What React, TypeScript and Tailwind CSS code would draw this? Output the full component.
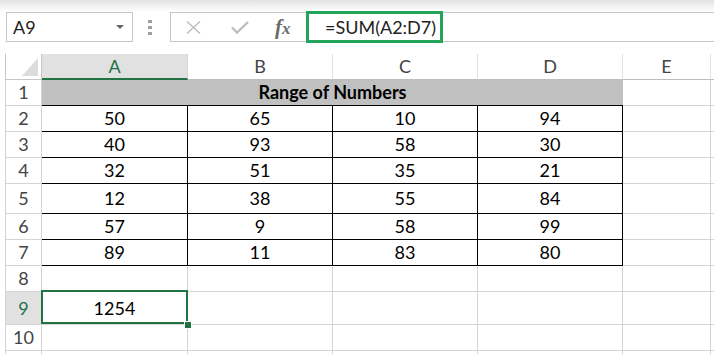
import React from "react";

const cols = [
  { name: "A", w: "w-[146px]" },
  { name: "B", w: "w-[145px]" },
  { name: "C", w: "w-[145px]" },
  { name: "D", w: "w-[145px]" },
  { name: "E", w: "w-[88px]" },
];

const heights = ["h-[26px]", "h-[26px]", "h-[26px]", "h-[26px]", "h-[30px]", "h-[26px]", "h-[26px]", "h-[26px]", "h-[33px]", "h-[26px]"];

const data = [
  [50, 65, 10, 94],
  [40, 93, 58, 30],
  [32, 51, 35, 21],
  [12, 38, 55, 84],
  [57, 9, 58, 99],
  [89, 11, 83, 80],
];

const Toolbar = () => (
  <div className="flex h-[30px] pl-[6px]">
    <div className="w-[127px] h-full border border-[#c6c6c6] flex items-center pl-[6px] pr-[8px]">
      <span className="text-[18px] text-[#222]">A9</span>
      <svg className="ml-auto" width="8" height="4" viewBox="0 0 8 4">
        <path d="M0 0 L8 0 L4 4 Z" fill="#666" />
      </svg>
    </div>
    <div className="w-[37px] flex flex-col items-center justify-center gap-[3px] pr-[4px]">
      <div className="w-[4px] h-[3px] bg-[#a0a0a0]" />
      <div className="w-[4px] h-[3px] bg-[#a0a0a0]" />
      <div className="w-[4px] h-[3px] bg-[#a0a0a0]" />
    </div>
    <div className="flex-1 flex border-y border-l border-[#c6c6c6]">
      <div className="w-[135px] flex items-center">
        <svg className="ml-[15px]" width="15" height="13" viewBox="0 0 15 13">
          <path d="M1 0.5 L14 12.5 M14 0.5 L1 12.5" stroke="#bdbdbd" strokeWidth="1.4" fill="none" />
        </svg>
        <svg className="ml-[30px]" width="18" height="13" viewBox="0 0 18 13">
          <path d="M1 6.5 L6 11.5 L17 1" stroke="#bdbdbd" strokeWidth="2.4" fill="none" />
        </svg>
        <span className="ml-[26px] font-['Liberation_Serif',serif] italic font-bold text-[21px] text-[#6a6a6a] leading-none">
          f<span className="text-[17px]">x</span>
        </span>
      </div>
      <div className="-my-[2px] w-[137px] border-[3px] border-[#22a55a] flex items-center pl-[16px]">
        <span className="text-[18px] text-[#222]">=SUM(A2:D7)</span>
      </div>
    </div>
  </div>
);

const HeaderRow = () => (
  <div className="flex h-[26px] pl-[5px] mt-[12px]">
    <div className="w-[37px] h-full border-l border-r border-b border-[#c6c6c6] relative">
      <svg className="absolute right-[3px] bottom-[3px]" width="16" height="18" viewBox="0 0 16 18">
        <path d="M16 0 L16 18 L0 18 Z" fill="#dcdcdc" />
      </svg>
    </div>
    {cols.map((c, i) =>
      i === 0 ? (
        <div
          key={c.name}
          className={`${c.w} h-full bg-[#e1e1e1] border-r border-[#d4d4d4] border-b-2 border-b-[#217346] flex items-center justify-center text-[18px] text-[#217346]`}
        >
          {c.name}
        </div>
      ) : (
        <div
          key={c.name}
          className={`${c.w} h-full border-r border-r-[#e1e1e1] border-b border-b-[#bdbdbd] flex items-center justify-center text-[18px] text-[#444]`}
        >
          {c.name}
        </div>
      )
    )}
    <div className="flex-1 h-full border-b border-[#bdbdbd]" />
  </div>
);

const RowHead = ({ n, h, active }: { n?: number; h: string; active?: boolean }) => (
  <div
    className={`w-[37px] ${h} border-l border-r border-b border-[#d4d4d4] flex items-center justify-center text-[18px] ${
      active ? "bg-[#e1e1e1] text-[#217346]" : "text-[#444]"
    }`}
  >
    {n}
  </div>
);

export default function App() {
  return (
    <div className="w-[714px] h-[354px] bg-white overflow-hidden font-['Lato',sans-serif]">
      <div className="h-[12px] bg-gradient-to-b from-[#e2e2e2] to-white" />
      <Toolbar />
      <HeaderRow />

      {/* row 1: merged title */}
      <div className="flex pl-[5px]">
        <RowHead n={1} h={heights[0]} />
        <div className="w-[581px] h-[26px] bg-[#c0c0c0] border-b border-black flex items-center justify-center font-bold text-[18px] text-black">
          Range of Numbers
        </div>
        <div className="w-[88px] h-[26px] border-r border-b border-[#d4d4d4]" />
        <div className="flex-1 h-[26px] border-b border-[#d4d4d4]" />
      </div>

      {data.map((row, r) => (
        <div key={r} className="flex pl-[5px]">
          <RowHead n={r + 2} h={heights[r + 1]} />
          {row.map((v, c) => (
            <div
              key={c}
              className={`${cols[c].w} ${heights[r + 1]} border-r border-b border-black flex items-center justify-center text-[18px] text-black`}
            >
              {v}
            </div>
          ))}
          <div className={`w-[88px] ${heights[r + 1]} border-r border-b border-[#d4d4d4]`} />
          <div className={`flex-1 ${heights[r + 1]} border-b border-[#d4d4d4]`} />
        </div>
      ))}

      {[8, 9, 10, 11].map((n) => {
        const h = n === 11 ? "h-[26px]" : heights[n - 1];
        return (
          <div key={n} className="flex pl-[5px]">
            <RowHead n={n === 11 ? undefined : n} h={h} active={n === 9} />
            {cols.map((c, i) => (
              <div
                key={c.name}
                className={`${c.w} ${h} border-r border-b border-[#d4d4d4] relative flex items-center justify-center text-[18px] text-black`}
              >
                {n === 9 && i === 0 && (
                  <>
                    1254
                    <div className="absolute z-10 left-[-1px] top-[-2px] w-[147px] h-[34px] border-2 border-[#217346]" />
                    <div className="absolute z-20 right-[-5px] bottom-[-5px] w-[8px] h-[8px] bg-[#217346] border border-white" />
                  </>
                )}
              </div>
            ))}
            <div className={`flex-1 ${h} border-b border-[#d4d4d4]`} />
          </div>
        );
      })}
    </div>
  );
}
